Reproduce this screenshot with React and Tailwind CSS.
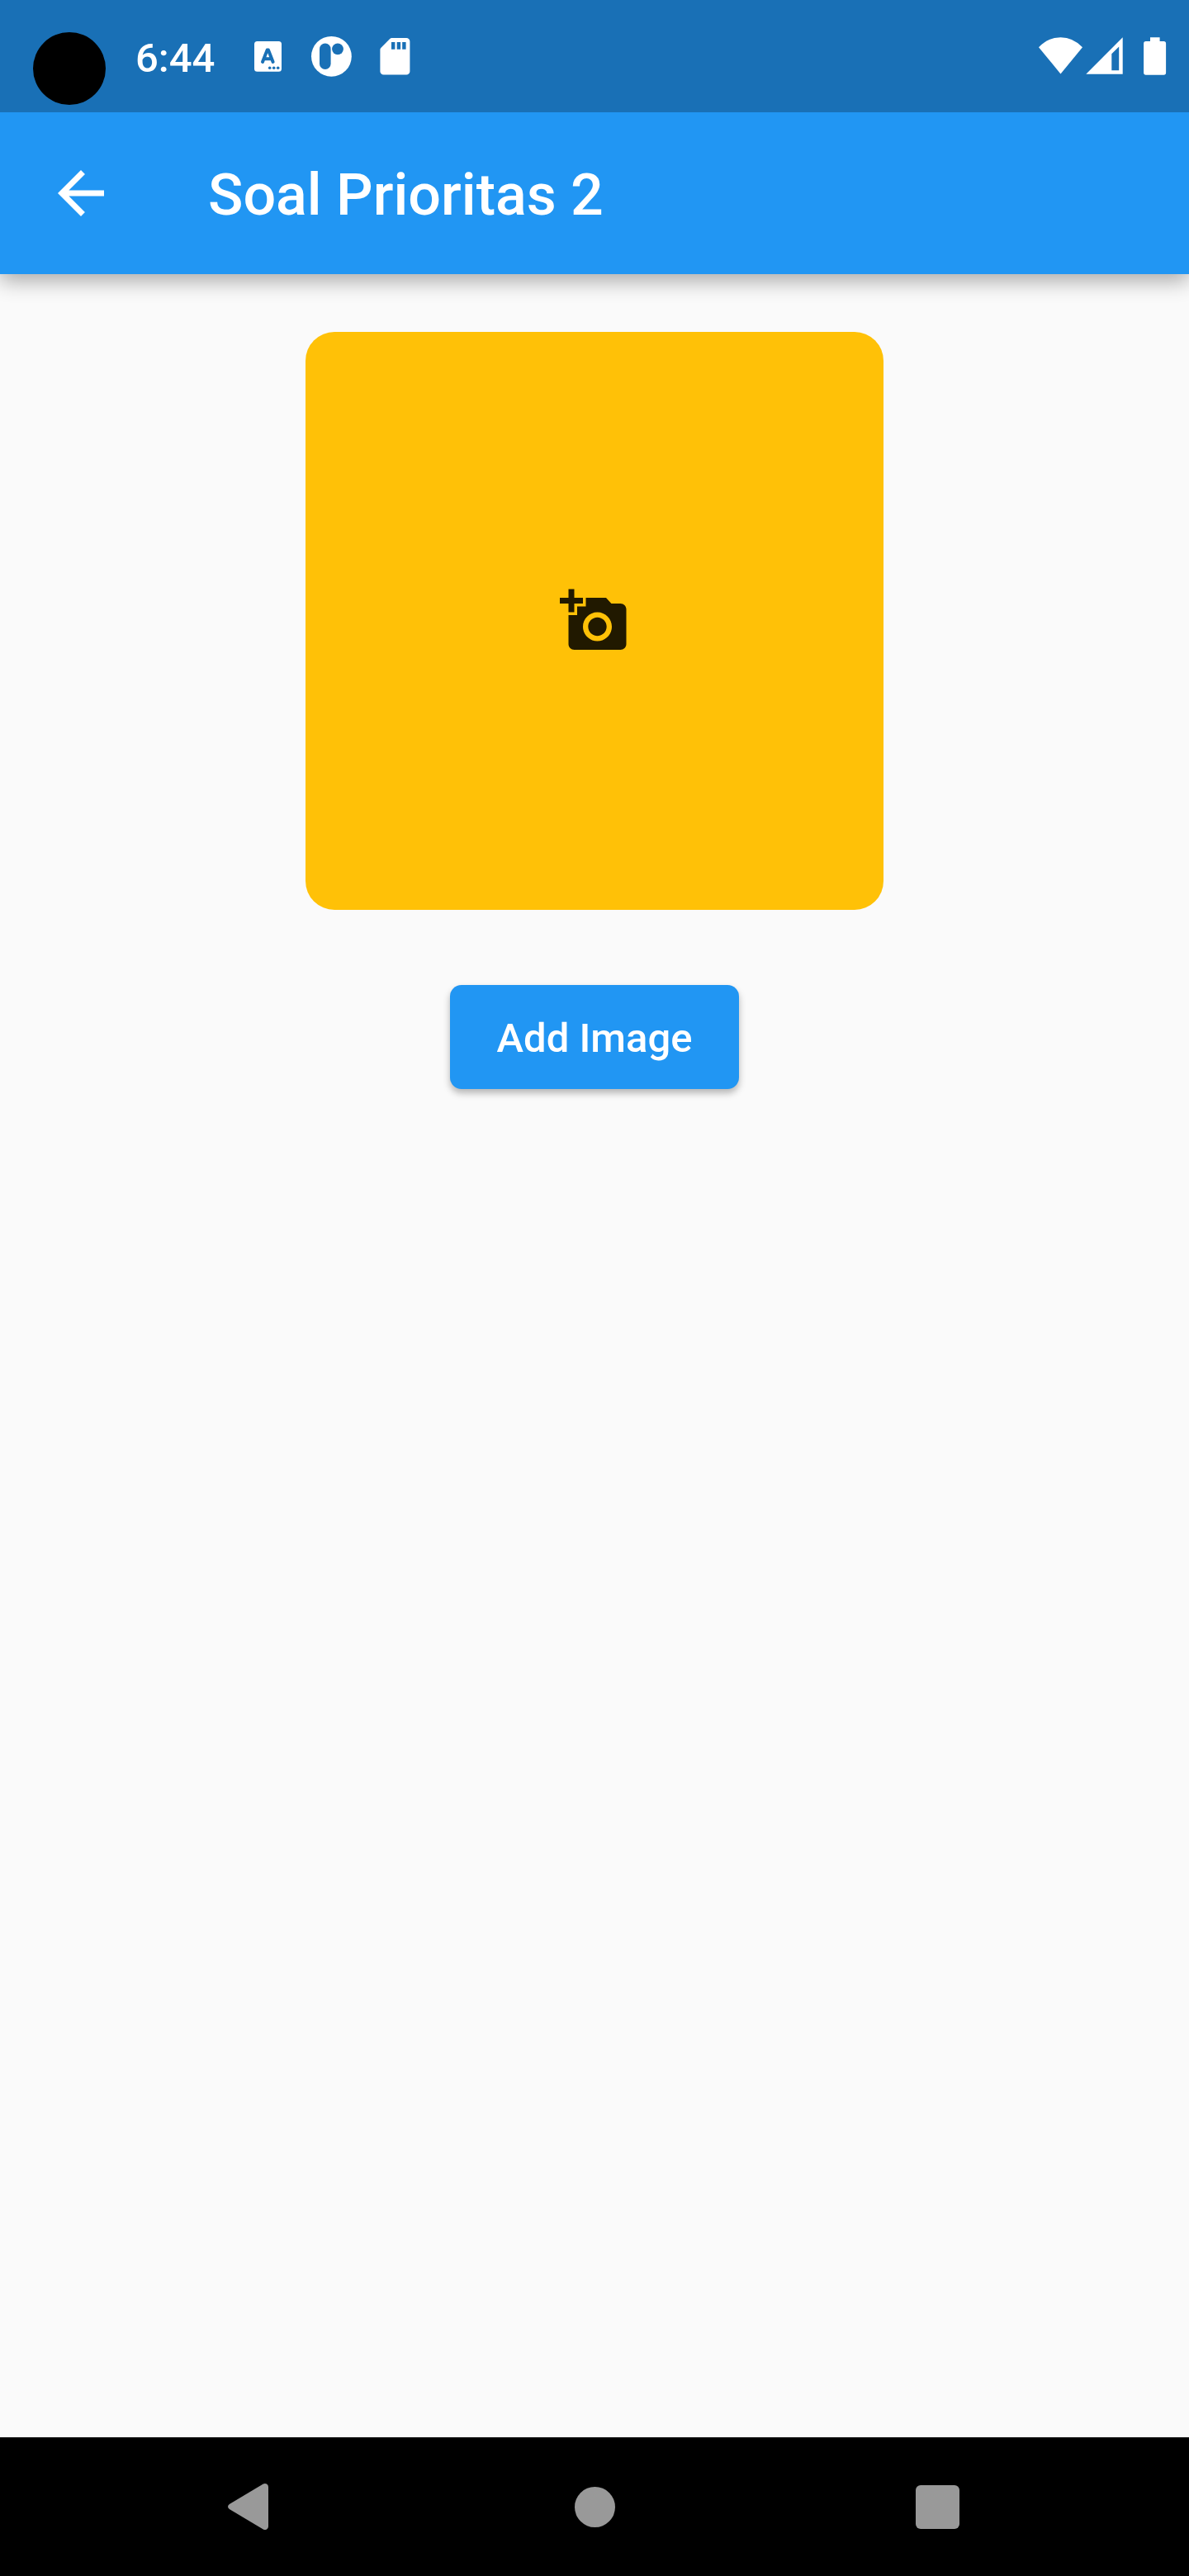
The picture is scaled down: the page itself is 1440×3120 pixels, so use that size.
import React from "react";

function KeyboardIcon() {
  return (
    <svg className="ml-[44px] h-[48px] w-[40px] shrink-0" viewBox="304 44 40 48">
      <rect x="308" y="50" width="33" height="36.7" rx="3.5" fill="#fff" />
      <path d="M318 75L323.6 60.6H325L330.6 75M320 71.2H329" fill="none" stroke="#1970b6" strokeWidth="4" strokeLinecap="round" strokeLinejoin="round" />
      <g fill="#1970b6">
        <circle cx="326.7" cy="82.3" r="1.8" />
        <circle cx="331.7" cy="82.3" r="1.8" />
        <circle cx="336.7" cy="82.3" r="1.8" />
      </g>
    </svg>
  );
}

function RoundAppIcon() {
  return (
    <svg className="ml-[32px] h-[50px] w-[50px] shrink-0" viewBox="376 43 50 50">
      <circle cx="401.4" cy="68.3" r="24.4" fill="#fff" />
      <rect x="387" y="52.6" width="13.6" height="31.4" rx="6.8" fill="#1970b6" />
      <circle cx="409" cy="59.3" r="6.9" fill="#1970b6" />
    </svg>
  );
}

function SdCardIcon() {
  return (
    <svg className="ml-[32px] h-[50px] w-[42px] shrink-0" viewBox="458 43 42 50">
      <path d="M474.6 46H492.2a4.2 4.2 0 0 1 4.2 4.2V86.4a4.2 4.2 0 0 1-4.2 4.2H464.6a4.2 4.2 0 0 1-4.2-4.2V60.3q0-1.3.9-2.2L472.2 47q1-1 2.4-1z" fill="#fff" />
      <path d="M474 51h4.4v8.8h-4.4zM480.700 51h4.400v8.800h-4.400zM487.200 51h4.400v8.800h-4.400z" fill="#1970b6" />
    </svg>
  );
}

function StatusBar() {
  return (
    <div className="relative z-20 flex h-[136px] shrink-0 items-center bg-[#1970b6] pl-10 text-white">
      <div className="mt-[30px] size-[88px] shrink-0 rounded-full bg-black" />
      <span className="ml-[36px] mt-[5px] w-[96px] whitespace-nowrap text-[49px] leading-[58px] font-medium">6:44</span>
      <KeyboardIcon />
      <RoundAppIcon />
      <SdCardIcon />
      <div className="ml-auto flex pr-[24px]">
        <svg className="h-[50px] w-[56px]" viewBox="1256 43 56 50">
          <path d="M1284.5 89.5L1258 57.2Q1269.5 45.2 1284.5 45.2Q1299.5 45.2 1311 57.2Z" fill="#fff" />
        </svg>
        <svg className="h-[50px] w-[52px]" viewBox="1312 43 52 50">
          <path fillRule="evenodd" d="M1315.3 89.7L1359.7 45.3V89.7ZM1346.3 65.3V85.2H1355.2V56.4Z" fill="#fff" />
        </svg>
        <svg className="ml-[16px] h-[50px] w-[36px]" viewBox="1380 43 36 50">
          <path d="M1393 45.3h11.6v4.7h4.8a2.7 2.7 0 0 1 2.7 2.7V88a2.7 2.7 0 0 1-2.7 2.7h-21.6a2.7 2.7 0 0 1-2.7-2.7V52.7a2.7 2.7 0 0 1 2.7-2.7h5.2z" fill="#fff" />
        </svg>
      </div>
    </div>
  );
}

function AppBar() {
  return (
    <header className="relative z-10 flex h-[196px] shrink-0 items-center bg-[#2196f3] pl-14 text-white shadow-[0_8px_24px_rgba(0,0,0,0.33)]">
      <svg className="size-[84px]" viewBox="0 0 24 24" fill="currentColor">
        <path d="M20 11H7.83l5.59-5.59L12 4l-8 8 8 8 1.41-1.41L7.83 13H20v-2z" />
      </svg>
      <h1 className="mt-[3px] ml-28 whitespace-nowrap text-[70px] leading-[82px] font-medium">Soal Prioritas 2</h1>
    </header>
  );
}

function NavBar() {
  return (
    <nav className="flex h-[168px] shrink-0 items-center justify-between bg-black px-[270px] text-[#999]">
      <svg className="size-[60px]" viewBox="270 3006 60 60" fill="currentColor">
        <path d="M277.8 3033L318.8 3008.5Q321 3007.3 323 3008.5Q325 3009.7 325 3012V3060Q325 3062.3 323 3063.5Q321 3064.7 318.8 3063.5L277.8 3039Q274.2 3036 277.8 3033Z" />
      </svg>
      <div className="ml-px size-[49px] rounded-full bg-[#999]" />
      <div className="mr-[8px] size-[53px] rounded-[6px] bg-[#999]" />
    </nav>
  );
}

export default function App() {
  return (
    <div className="flex h-[3120px] w-[1440px] flex-col overflow-hidden bg-[#fafafa] font-['Roboto',sans-serif]">
      <StatusBar />
      <AppBar />
      <main className="flex flex-1 flex-col items-center pt-[70px]">
        <div className="flex size-[700px] items-center justify-center rounded-[35px] bg-[#ffc107]">
          <svg className="size-[84px]" viewBox="0 0 24 24" fill="#000" fillOpacity="0.87">
            <path d="M3 4V1h2v3h3v2H5v3H3V6H0V4h3zm3 6V7h3V4h7l1.83 2H21c1.1 0 2 .9 2 2v12c0 1.1-.9 2-2 2H5c-1.1 0-2-.9-2-2V10h3zm7 9c2.76 0 5-2.24 5-5s-2.24-5-5-5-5 2.24-5 5 2.24 5 5 5zm-3.2-5c0 1.77 1.43 3.2 3.2 3.2s3.2-1.43 3.2-3.2-1.43-3.2-3.2-3.2-3.2 1.43-3.2 3.2z" />
          </svg>
        </div>
        <button className="mt-[91px] flex h-[126px] w-[350px] items-center justify-center rounded-[14px] bg-[#2196f3] pt-[4px] text-[49px] leading-[58px] font-medium whitespace-nowrap text-white shadow-[0_5px_9px_rgba(0,0,0,0.28)]">
          Add Image
        </button>
      </main>
      <NavBar />
    </div>
  );
}
